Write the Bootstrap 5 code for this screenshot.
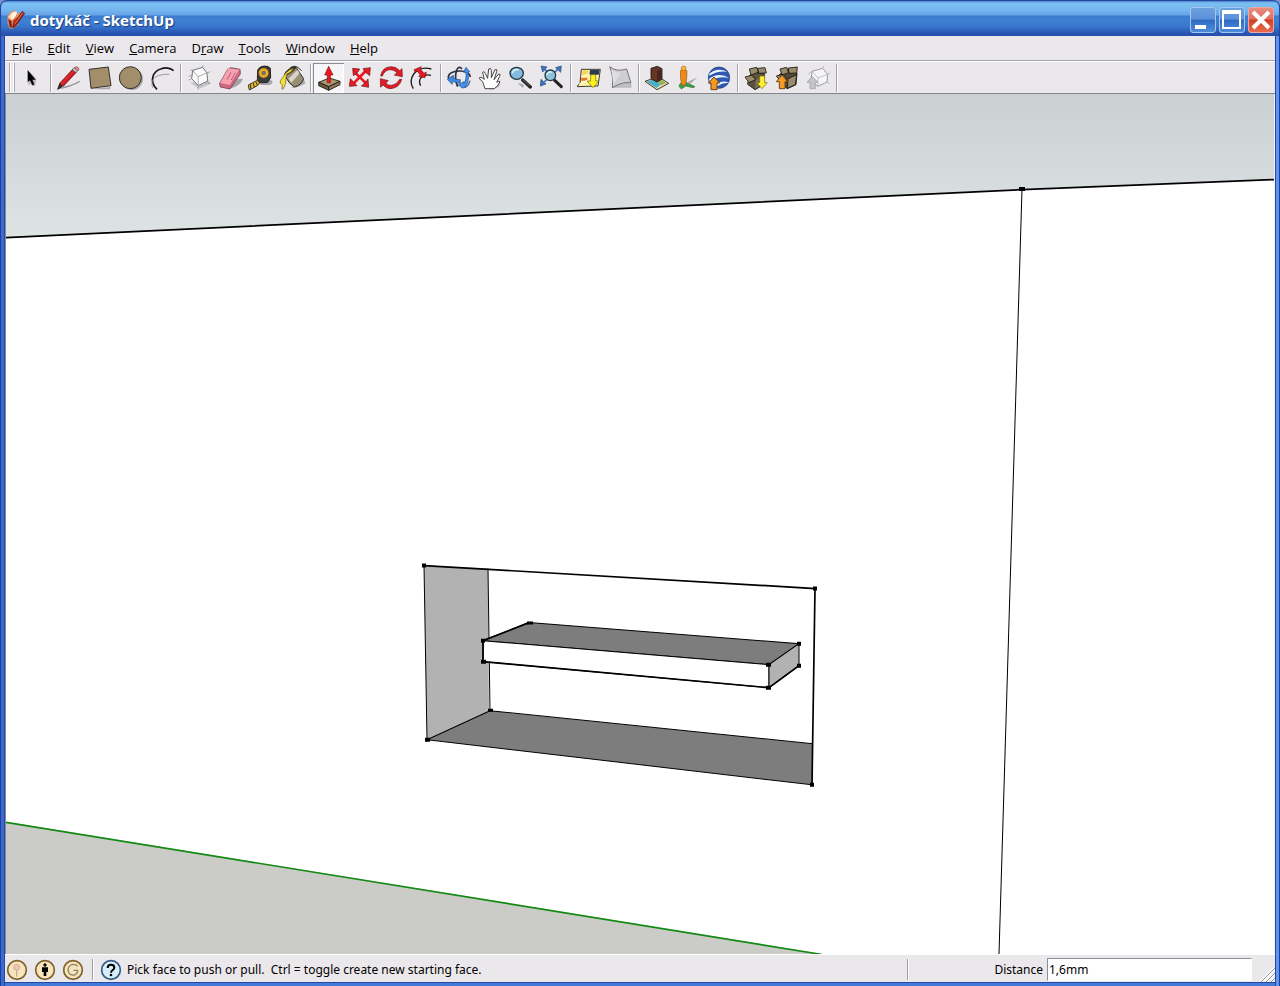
<!DOCTYPE html>
<html lang="en">
<head>
<meta charset="utf-8">
<meta name="viewport" content="width=device-width, initial-scale=1">
<title>dotykáč - SketchUp</title>
<link href="https://cdn.jsdelivr.net/npm/bootstrap@5.3.0/dist/css/bootstrap.min.css" rel="stylesheet">
<style>
body { font-family: "Noto Sans", sans-serif; font-size: 12px; line-height: 16px; color: #000; background: #7b8fd0; }
.app-window { background: linear-gradient(90deg, #1c3f9c 0 1px, #3c6ad0 1px 4px, #2448a4 4px 5px, transparent 5px calc(100% - 5px), #2448a4 calc(100% - 5px) calc(100% - 4px), #5f95ee calc(100% - 4px) calc(100% - 1px), #1c3f9c calc(100% - 1px)), #4379d8; border-radius: 7px 7px 0 0; padding-bottom: 3px; }
.title-bar { height: 36px; padding: 3px 5px 0 5px; border-radius: 7px 7px 0 0; border: 1px solid #24459c; border-bottom: 0; background: linear-gradient(#4b7fd0 0, #7cc0f2 2px, #74b5ee 9px, #65a4e6 14px, #3b7cd0 15px, #3f7fd2 19px, #3a78ce 25px, #2956b4 32px, #284ea8 100%); }
.title-text { font: bold 15px/20px "Noto Sans", sans-serif; color: #fff; text-shadow: 1px 1px 1px #173a80; }
.win-btns { gap: 3px; }
.win-btn { width: 26px; height: 26px; padding: 0; border: 1px solid #a4c6ef; border-radius: 3px; background: linear-gradient(#6d9fe0 0, #5c92da 46%, #2e6cc4 50%, #4e8cd8 100%); }
.win-close { border-color: #e9a9a8; background: linear-gradient(#ea8c7c 0, #dc7060 46%, #d43c20 50%, #e86c50 100%); }
.frame-body { margin: 0 5px; background: #ebe8ec; }
.menu-bar { height: 25px; border-bottom: 1px solid #a5a3aa; }
.menu-bar a { font-family: "Open Sans", sans-serif; font-size: 13px; line-height: 20px; padding: 2px 8px 2px 7px; color: #000; text-decoration: none; }
.tool-bar { height: 33px; padding: 1px 0 1px 4px; border-top: 1px solid #fff; border-bottom: 1px solid #85858b; }
.grip-lines { width: 6px; height: 29px; border-left: 1px solid #a9a7ae; border-right: 1px solid #a9a7ae; background: linear-gradient(90deg, #fff 0 1px, #ebe8ec 1px 3px, #fff 3px); margin-right: 1px; }
.tool-btn { width: 31px; height: 30px; padding: 0; border: 0; background: none; }
.tool-btn svg { width: 31px; height: 30px; display: block; }
.tool-btn.pressed { background: #f6f5f8; box-shadow: inset 1px 1px #8d8c93, inset -1px -1px #fff; }
.tool-sep { width: 6px; height: 28px; background: linear-gradient(90deg, transparent 3px, #a3a1a8 3px 4px, #fff 4px 5px, transparent 5px); }
.viewport { min-height: 0; background: #fff; border-left: 1px solid #8b8b90; border-right: 1px solid #f4f4f6; }
.status-bar { height: 29px; padding: 2px 0 0 1px; border-top: 1px solid #fff; border-bottom: 1px solid #2448a4; }
.status-icons { gap: 6px; }
.status-btn { width: 22px; height: 22px; padding: 0; border: 0; background: none; }
.status-sep { width: 2px; height: 21px; border-left: 1px solid #9d9ba3; border-right: 1px solid #fff; }
.status-gap { margin: 0 6px 0 8px; }
.status-text { white-space: pre; padding-left: 5px; }
.measure { width: 205px; height: 23px; padding: 0 1px; border: 1px solid #fff; border-top-color: #8f8d96; border-left-color: #8f8d96; border-radius: 0; background: #fff; color: #000; outline-offset: -1px; }
.measure-label { margin-right: 4px; }
.panel-measure { width: 343px; }
.o { stroke: #171512; stroke-width: 2.5; stroke-linejoin: round; }
</style>
</head>
<body>
<div class="app-window vh-100 d-flex flex-column overflow-hidden">
  <header class="title-bar d-flex align-items-center flex-shrink-0">
    <svg width="20" height="22" viewBox="18 24 60 66" class="me-1" aria-hidden="true">
      <path d="M22 48L29 35l17-7 6 9 10 1-8 18 1 15-18 12-9-1-5-14z" fill="#e78c58"/><path d="M24 49l12-15 14-4-2 14-12 13z" fill="#fbd8b0"/><path d="M35 40l10-8 7 4-13 20-5 2z" fill="#fff4df"/><path d="M25 55l9 5 2 20-7-2z" fill="#74261c"/><path d="M38 57l14-8 2 18-15 11z" fill="#df4229"/><path d="M40 69L67 31l7 6-27 38-9 5z" fill="#b4211c" stroke="#44191c" stroke-width="2"/><path d="M44 69L68 35" stroke="#f3a16a" stroke-width="2"/>
    </svg>
    <h1 class="title-text m-0 flex-grow-1">dotykáč - SketchUp</h1>
    <div class="win-btns d-flex">
      <button type="button" class="win-btn" aria-label="Minimize"><svg class="d-block" width="24" height="24"><path d="M4 17h11v4H4z" fill="#fff"/></svg></button>
      <button type="button" class="win-btn" aria-label="Maximize"><svg class="d-block" width="24" height="24"><path d="M2 2h19v19H2zm2 4v13h15V6z" fill="#fff" fill-rule="evenodd"/></svg></button>
      <button type="button" class="win-btn win-close" aria-label="Close"><svg class="d-block" width="24" height="24"><path d="M4 4l16 16M20 4L4 20" stroke="#fff" stroke-width="4"/></svg></button>
    </div>
  </header>
  <div class="frame-body d-flex flex-column flex-grow-1 overflow-hidden">
    <nav class="menu-bar d-flex align-items-center flex-shrink-0" aria-label="Main menu">
      <a href="#"><u>F</u>ile</a><a href="#"><u>E</u>dit</a><a href="#"><u>V</u>iew</a><a href="#"><u>C</u>amera</a><a href="#">D<u>r</u>aw</a><a href="#"><u>T</u>ools</a><a href="#"><u>W</u>indow</a><a href="#"><u>H</u>elp</a>
    </nav>
    <div class="tool-bar d-flex align-items-center flex-shrink-0" role="toolbar" aria-label="Getting started">
      <span class="grip-lines"></span>
      <button type="button" class="tool-btn" aria-label="Select"><svg viewBox="48 9 93 90"><path d="M91 37l18 19-3 20-7 4-8-8-7 4z" fill="#bbb9be"/><path d="M83 30v37l7-6 7 15 6-3-6-14h10z" fill="#000"/></svg></button>
      <span class="tool-sep"></span>
      <button type="button" class="tool-btn" aria-label="Line"><svg viewBox="159 9 93 90"><path d="M174 86q38-6 65-22" stroke="#99979c" stroke-width="4" fill="none"/><path d="M173 88l6-17 8 8z" fill="#3a2a20" class="o"/><path d="M179 70l39-42 11 9-39 42z" fill="#d31920" stroke="#4e1012" stroke-width="2"/><path d="M184 72l38-40" stroke="#e8403c" stroke-width="3"/><path d="M217 29l5-6 11 9-5 6z" fill="#c7c7c7" stroke="#444" stroke-width="2"/><path d="M223 23q6-6 12 0 5 5-2 10z" fill="#ec8792" stroke="#80404a" stroke-width="2"/></svg></button>
      <button type="button" class="tool-btn" aria-label="Rectangle"><svg viewBox="252 9 93 90"><path d="M276 86l55-5v7h-40z" fill="#aaa8ad"/><path d="M267 28l58-7 8 56-60 8z" fill="#a38e6c" class="o"/></svg></button>
      <button type="button" class="tool-btn" aria-label="Circle"><svg viewBox="345 9 93 90"><circle cx="396" cy="57" r="33" fill="#aaa8ad"/><circle cx="391" cy="53" r="33" fill="#a38e6c" class="o"/></svg></button>
      <button type="button" class="tool-btn" aria-label="Arc"><svg viewBox="438 9 93 90" fill="none"><path d="M453 61q20-20 55-18" stroke="#9c9aa0" stroke-width="3"/><path d="M471 88C446 63 459 34 482 27q22-9 39 5" stroke="#171719" stroke-width="5"/><path d="M458 84q-4-12-2-25" stroke="#aaa" stroke-width="3"/></svg></button>
      <span class="tool-sep"></span>
      <button type="button" class="tool-btn" aria-label="Make Component"><svg viewBox="21 9 93 90"><path d="M42 68l28 18 34-15-5-9z" fill="#c5c3c8"/><path d="M50 31l30-9 13 17 2 24-28 14-20-21z" fill="#fbfbfc" stroke="#77757b" stroke-width="3"/><path d="M50 31l16 19 27-11M66 50l1 27M38 49l12-3m15 35 2 8m27-21 9 3M80 22l2-6M43 30l7 1m43 8 10-4M38 60l9-4" fill="none" stroke="#858389" stroke-width="2"/></svg></button>
      <button type="button" class="tool-btn" aria-label="Eraser"><svg viewBox="114 9 93 90"><path d="M158 87q36-8 43-31l-16 1z" fill="#a5a3a9"/><path d="M131 70l24-42 9-5 28 5 1 14-31 45-29-6z" fill="#cf6c83" stroke="#743f4c" stroke-width="2.5"/><path d="M132 70l25-45 34 4-29 47z" fill="#f6a0b0"/><path d="M131 71l31 6-1 9M162 77l29-47" fill="none" stroke="#bd536d" stroke-width="2"/><path d="M154 58l12-22m0 24 12-22" stroke="#b44763" stroke-width="3" stroke-dasharray="6 2"/></svg></button>
      <button type="button" class="tool-btn" aria-label="Tape Measure"><svg viewBox="207 9 93 90"><path d="M252 75h28q12-4 9-12l-11-5z" fill="#a6a4a9"/><path d="M245 30q6-12 20-12 13 0 18 7l1 28-9 14-23 2-8-10z" fill="#393a3c" class="o"/><circle cx="263" cy="39" r="15" fill="#f0ae20" stroke="#755817" stroke-width="2"/><circle cx="263" cy="39" r="7" fill="#76736b"/><path d="M244 61l7 8-7 8-24 13-3-15z" fill="#e8bd32" class="o"/><path d="M224 73v13m8-16 3 11m5-15 4 9" stroke="#332911" stroke-width="3"/></svg></button>
      <button type="button" class="tool-btn" aria-label="Paint Bucket"><svg viewBox="300 9 93 90"><path d="M345 84q27-2 43-14l-5-14z" fill="#a7a5aa"/><path d="M330 42l30-20 23 34q-8 20-27 25-16-8-26-28z" fill="#998d76" class="o"/><path d="M337 56l27-26 7 10-25 28z" fill="#d9d4c7"/><path d="M325 44q6-17 30-24 8 2-7 15-18 12-23 9z" fill="#37332c" class="o"/><path d="M329 39q12-12 25-14-8 13-22 18-4 17-3 27-3 8-8 18-5 0-2-13-9-5-6-13 8-10 16-23z" fill="#f5df35" stroke="#655b1a" stroke-width="2"/><path d="M342 24q18-14 35 9" fill="none" class="o"/></svg></button>
      <span class="tool-sep"></span>
      <button type="button" class="tool-btn pressed" aria-label="Push/Pull" aria-pressed="true"><svg viewBox="39 9 93 90"><path d="M56 67l32-13 32 10-34 16z" fill="#aa946e" class="o"/><path d="M56 67l30 13v11L56 77z" fill="#6d5a3f" class="o"/><path d="M86 80l34-16v10L86 91z" fill="#8d7757" class="o"/><path d="M82 68V45h-8l12-26 13 26h-8v23z" fill="#ee171d" stroke="#801016" stroke-width="2"/></svg></button>
      <button type="button" class="tool-btn" aria-label="Move"><svg viewBox="132 9 93 90"><path d="M162 35l34 33M197 33l-37 38" stroke="#f0161f" stroke-width="8"/><g fill="#e71b24" stroke="#681118" stroke-width="2"><path d="M158 25l21 2-4 7-5 6-7 5-3 2z"/><path d="M211 23l-2 24-7-6-6-5-5-6-2-4z"/><path d="M206 82l-22-4 6-5 5-6 6-6 3-4z"/><path d="M148 79l3-23 6 6 6 6 5 6 3 3z"/></g></svg></button>
      <button type="button" class="tool-btn" aria-label="Rotate"><svg viewBox="225 9 93 90"><g fill="#e21b24" stroke="#731017" stroke-width="2"><path d="M242 48q4-27 31-28 16 0 26 12l7-6 1 24-24-5 8-7q-9-10-21-9-16 1-23 19z"/><path d="M305 58q-6 25-32 28-15 0-24-11l-7 7-1-26 24 6-8 7q8 9 19 7 14-2 23-18z"/></g></svg></button>
      <button type="button" class="tool-btn" aria-label="Offset"><svg viewBox="318 9 93 90" fill="none"><path d="M340 86q-14-22 1-44 20-24 53-15M362 77q-7-11 0-23 12-13 31-8" stroke="#1c1a1c" stroke-width="4"/><path d="M342 29l22-9-3 7 11 13 7-4-4 17-19-4 5-4-10-13-6 4z" fill="#e81821" stroke="#801018" stroke-width="2"/></svg></button>
      <span class="tool-sep"></span>
      <button type="button" class="tool-btn" aria-label="Orbit"><svg viewBox="21 9 93 90"><g fill="none" stroke="#2a303c" stroke-width="5"><path d="M65 80Q54 54 62 30q7-14 16-3"/><path d="M37 55q-2-20 32-22 32-1 34 18"/></g><path d="M34 58l18-12v8q11 6 21 5v11q-13-1-22-6l-3 9z" fill="#4189e0" stroke="#184889" stroke-width="2"/><path d="M79 84l-12-9 17-10v5q9-13 5-34l-6 1 7-15 11 13-5 1q5 29-9 45 10-3 15-19-3 22-23 22z" fill="#4792eb" stroke="#184889" stroke-width="2"/></svg></button>
      <button type="button" class="tool-btn" aria-label="Pan"><svg viewBox="114 9 93 90"><path d="M145 85q32 0 48-18l-4 13-20 9z" fill="#b6b4b9"/><path d="M147 86l-7-21-11-10q4-7 16 3l-5-21q3-6 8 3l7 15 3-28q7-5 8 4l0 22 11-24q7-3 5 6l-8 24 14-17q7-1 3 7l-9 18q5-5 10-2-6 14-17 21z" fill="#fff" stroke="#252326" stroke-width="2.5"/></svg></button>
      <button type="button" class="tool-btn" aria-label="Zoom"><svg viewBox="207 9 93 90"><path d="M245 70q13-1 20 7l-5 6z" fill="#aaa"/><path d="M260 60l23 21" stroke="#202021" stroke-width="10" stroke-linecap="round"/><path d="M261 60l20 17" stroke="#66696b" stroke-width="3"/><ellipse cx="242" cy="40" rx="20" ry="18" fill="#82bbdc" stroke="#253645" stroke-width="4"/><path d="M229 40q4-15 18-10" fill="none" stroke="#d9effa" stroke-width="5"/></svg></button>
      <button type="button" class="tool-btn" aria-label="Zoom Extents"><svg viewBox="300 9 93 90"><path d="M315 18l18 3-13 15zM376 18l-2 19-15-14zM313 78l2-20 15 14z" fill="#3f75bb" stroke="#20477e" stroke-width="2"/><path d="M326 28l7 7m32-7-8 8m-32 30 7-7" stroke="#3f75bb" stroke-width="5"/><path d="M356 61l20 19" stroke="#222" stroke-width="9" stroke-linecap="round"/><circle cx="343" cy="46" r="16" fill="#8fc3db" stroke="#273844" stroke-width="4"/><path d="M333 45q4-12 14-8" fill="none" stroke="#e1f4fc" stroke-width="4"/></svg></button>
      <span class="tool-sep"></span>
      <button type="button" class="tool-btn" aria-label="Get Current View"><svg viewBox="411 9 93 90"><path d="M436 28h57l-7 50-62 2q2-7 8-10z" fill="#fff4a6" class="o"/><path d="M440 31h18l-5 17h-17z" fill="#f4d760"/><path d="M462 30h29l-3 14h-28z" fill="#293b52"/><path d="M437 53h18l-3 9h-18z" fill="#e6722c"/><path d="M430 72l26-12m-20-10 24-8" stroke="#fdfad0" stroke-width="4"/><path d="M464 44h15v19h10l-18 20-18-20h11z" fill="#fff218" stroke="#6b6412" stroke-width="2"/></svg></button>
      <button type="button" class="tool-btn" aria-label="Toggle Terrain"><svg viewBox="504 9 93 90"><path d="M530 82h55v-9l-13-6z" fill="#c1bfc5" stroke="#858389"/><path d="M521 20q20 17 51 7l13 42q-22-6-56 14 4-35-8-63z" fill="#cecdd2" stroke="#76747b" stroke-width="3"/><path d="M526 28q14 13 28 10l-22 36z" fill="#dedde1"/></svg></button>
      <span class="tool-sep"></span>
      <button type="button" class="tool-btn" aria-label="Place Model"><svg viewBox="33 9 93 90"><path d="M45 64l39-14 32 20-35 19z" fill="#efe6a8" class="o"/><path d="M50 65l20-7 24 15-14 11z" fill="#4dadcc"/><path d="M73 58l13-5 23 17-16 6z" fill="#9bb45c"/><path d="M63 25l19-6 14 7v31l-15 9-18-10z" fill="#673625" class="o"/><path d="M81 33l14-6v29l-14 8z" fill="#4a251b"/></svg></button>
      <button type="button" class="tool-btn" aria-label="Street View"><svg viewBox="126 9 93 90"><path d="M172 67l31-16-22 20z" fill="#aaa"/><path d="M151 70l15-4 29 14-6 3-22-5-13 9-7-8z" fill="#36a447" stroke="#226c31" stroke-width="2"/><path d="M151 32q10-8 20 0l-1 22-3 20-11 3-4-20z" fill="#ee8a17" stroke="#955516" stroke-width="2"/><circle cx="161" cy="25" r="7" fill="#f8b634" stroke="#a76818" stroke-width="2"/></svg></button>
      <button type="button" class="tool-btn" aria-label="Google Earth"><svg viewBox="219 9 93 90"><circle cx="267" cy="53" r="32" fill="#3159b4" stroke="#172f70" stroke-width="2"/><path d="M238 41q24-20 54-6-30-4-54 12zm-1 16q29-23 61-2-30-9-59 9zm19 18q20-17 41-6-20-2-35 10z" fill="#edf6ff"/><path d="M243 89V69h-8l17-18 17 18h-8v20z" fill="#f59a21" stroke="#674419" stroke-width="3"/></svg></button>
      <span class="tool-sep"></span>
      <button type="button" class="tool-btn" aria-label="Get Models"><svg viewBox="330 9 93 90"><path d="M357 48l20-14 26 7-2 33-26 15-22-16z" fill="#5b5240" class="o"/><path d="M358 27l22-5 5 15-22 8zM383 25l22-2 4 16-23 1zM345 51l20-5 12 13-20 9z" fill="#998b6b" class="o"/><path d="M377 60l24-12-2 25-24 13z" fill="#7c6e51"/><path d="M389 48h15v20h8l-16 18-15-18h8z" fill="#fff12b" stroke="#706615" stroke-width="2"/></svg></button>
      <button type="button" class="tool-btn" aria-label="Share Model"><svg viewBox="423 9 93 90"><path d="M449 43l24-14 28 10-3 35-26 12-22-17z" fill="#554a38" class="o"/><path d="M450 27l20-5 6 16-20 7zM475 24l27-3-2 18-23 1zM439 48l20-5 10 12-18 8zM474 56l26-12-4 30-24 11z" fill="#998b6b" class="o"/><path d="M448 86V65h-9l17-20 17 20h-8v21z" fill="#f49b24" stroke="#694719" stroke-width="3"/></svg></button>
      <button type="button" class="tool-btn" aria-label="Share Component"><svg viewBox="516 9 93 90"><path d="M546 34l32-9 15 18-2 23-28 13-20-20z" fill="#f5f4f7" stroke="#9d9ba1" stroke-width="3"/><path d="M546 34l18 20 29-11M564 54l-1 25M533 43l13-9m45 32 8 5M578 25l3-7m12 25 8-5" fill="none" stroke="#aaa8af" stroke-width="2"/><path d="M540 86V67h-9l16-18 17 18h-8v19z" fill="#c6c5ca" stroke="#99979d" stroke-width="2"/></svg></button>
      <span class="tool-sep"></span>
    </div>
    <main class="viewport flex-grow-1">
      <svg class="d-block w-100 h-100" viewBox="6 95 1268 859" preserveAspectRatio="none" role="img" aria-label="Model with a shelf in a wall recess">
        <defs><linearGradient id="sky" x1="0" y1="0" x2="0" y2="1"><stop offset="0" stop-color="#cad0d2"/><stop offset="1" stop-color="#dee3e4"/></linearGradient></defs>
        <path d="M6 95h1268v85l-252 10L6 239z" fill="url(#sky)"/>
        <path d="M6 822l816 132H6z" fill="#cbccc7"/>
        <path d="M6 822.500l816 132" stroke="#138a13" stroke-width="1.700"/>
        <path d="M6 238.500l1016-48 252-10" fill="none" stroke="#000" stroke-width="1.700"/>
        <path d="M1022 190l-23 764" stroke="#000" stroke-width="1"/>
        <path d="M424 566l64 3 1 142-62 29z" fill="#b2b2b2"/>
        <path d="M427 740l62-29 323 33v41z" fill="#7d7d7d"/>
        <path d="M427 740l-3-174M488 569l2 142 323 33M490 711l-63 29 385 45" fill="none" stroke="#000"/>
        <path d="M424 566l391 23-3 196" fill="none" stroke="#000" stroke-width="1.700"/>
        <path d="M483 641l46-18 270 21-30 21z" fill="#7d7d7d" stroke="#000"/>
        <path d="M483 641l286 24v23l-286-26z" fill="#fff" stroke="#000"/>
        <path d="M769 665l30-21v22l-30 22z" fill="#b2b2b2" stroke="#000"/>
        <path d="M529 623l-46 18v21l286 26 30-22" fill="none" stroke="#000" stroke-width="1.700"/>
        <path d="M422 564h4v4h-4zM813 587h4v4h-4zM425 738h5v4h-5zM810 783h4v4h-4zM481 639h4v4h-4zM481 660h5v4h-5zM766 663h5v4h-5zM766 686h5v4h-5zM797 642h4v4h-4zM797 664h4v4h-4zM527 622h6v3h-6zM488 709h5v3h-5zM1019 188h6v4h-6z"/>
      </svg>
    </main>
    <footer class="status-bar d-flex align-items-center flex-shrink-0">
      <div class="status-icons d-flex">
        <button type="button" class="status-btn" aria-label="Geo-location"><svg class="d-block" width="22" height="22" viewBox="18 57 66 66"><circle cx="51" cy="90" r="28" fill="#f6e4bc" stroke="#80602a" stroke-width="5"/><path d="M50 90v20" stroke="#b99d8c" stroke-width="3"/><circle cx="50" cy="82" r="9" fill="#f0c3b5" stroke="#ce9a8d" stroke-width="2"/></svg></button>
        <button type="button" class="status-btn" aria-label="Credits"><svg class="d-block" width="22" height="22" viewBox="102 57 66 66"><circle cx="135" cy="90" r="28" fill="#f6e4bc" stroke="#80602a" stroke-width="5"/><circle cx="135" cy="75" r="5"/><path d="M126 82h18v14h-5v12h-8V96h-5z"/></svg></button>
        <button type="button" class="status-btn" aria-label="Sign in"><svg class="d-block" width="22" height="22" viewBox="186 57 66 66"><circle cx="219" cy="90" r="28" fill="#f6e4bc" stroke="#80602a" stroke-width="5"/><path d="M233 79q-9-9-20-4-11 6-8 19 4 13 18 11 10-3 10-14h-13" fill="none" stroke="#8e8062" stroke-width="4"/></svg></button>
      </div>
      <span class="status-sep status-gap"></span>
      <button type="button" class="status-btn" aria-label="Help"><svg class="d-block" width="22" height="22" viewBox="300 57 66 66"><circle cx="333" cy="90" r="28" fill="#d7edf8" stroke="#315a80" stroke-width="5"/><path d="M323 84q0-10 10-10t10 9c0 7-10 7-10 15" fill="none" stroke="#000" stroke-width="6"/><circle cx="333" cy="105" r="4"/></svg></button>
      <span class="status-text flex-grow-1">Pick face to push or pull.  Ctrl = toggle create new starting face.</span>
      <span class="status-sep"></span>
      <div class="panel-measure d-flex align-items-center justify-content-end">
        <label class="measure-label" for="distance">Distance</label>
        <input id="distance" class="measure" type="text" value="1,6mm">
      </div>
      <svg class="align-self-end ms-2" width="15" height="15" aria-hidden="true"><path d="M1 15L15 1M6 15l9-9M11 15l4-4" stroke="#fff" stroke-width="3"/><path d="M1 15L15 1M6 15l9-9M11 15l4-4" stroke="#92909a"/></svg>
    </footer>
  </div>
</div>
<script src="https://cdn.jsdelivr.net/npm/bootstrap@5.3.0/dist/js/bootstrap.bundle.min.js"></script>
</body>
</html>
